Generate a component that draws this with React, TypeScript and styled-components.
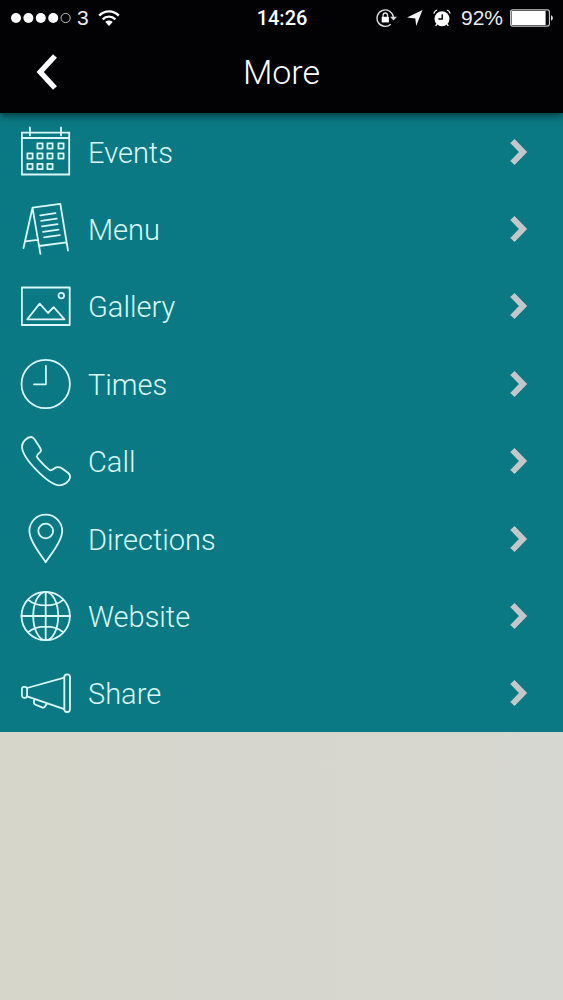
import React from "react";
import styled, { createGlobalStyle } from "styled-components";

const GlobalStyle = createGlobalStyle`
  *, *::before, *::after { box-sizing: border-box; }
  body {
    margin: 0;
    min-height: 100vh;
    background: linear-gradient(90deg, #d6d6ca 0%, #d6d6ce 40%, #d7d7d1 100%);
    font-family: Roboto, "Liberation Sans", sans-serif;
    font-weight: 300;
  }
`;

const Top = styled.div`
  position: relative;
  background: #020104;
  color: #fff;
  box-shadow: 0 2px 8px rgba(0, 0, 0, 0.6);
`;

const StatusBar = styled.div`
  display: grid;
  grid-template-columns: 1fr auto 1fr;
  align-items: center;
  height: 36px;
  padding: 0 10px 0 11px;
`;

const StatusGroup = styled.div<{ $end?: boolean; $gap: number }>`
  display: flex;
  align-items: center;
  justify-content: ${(p) => (p.$end ? "flex-end" : "flex-start")};
  gap: ${(p) => p.$gap}px;
`;

const StatusText = styled.span`
  font-family: "Liberation Sans", sans-serif;
  font-weight: 400;
  font-size: 21px;
  line-height: 24px;
  color: #ececee;
`;

const Clock = styled.time`
  font-size: 20px;
  line-height: 24px;
  font-weight: 500;
`;

const NavBar = styled.header`
  display: grid;
  grid-template-columns: 72px 1fr 72px;
  align-items: center;
  height: 77px;
  padding-bottom: 6px;
`;

const BackButton = styled.button`
  display: flex;
  align-items: center;
  justify-content: center;
  height: 56px;
  padding: 0 0 0 22px;
  border: 0;
  background: none;
  color: inherit;
  cursor: pointer;
`;

const Title = styled.h1`
  margin: 0;
  text-align: center;
  font-size: 34px;
  line-height: 40px;
  font-weight: 300;
`;

const List = styled.ul`
  display: grid;
  grid-auto-rows: 1fr;
  min-height: 619px;
  margin: 0;
  padding: 0;
  list-style: none;
  background: #0a7983;
`;

const Item = styled.li`
  display: grid;
`;

const RowLink = styled.a`
  display: flex;
  align-items: center;
  gap: 16px;
  padding: 0 35px 0 20px;
  color: #daf8f9;
  text-decoration: none;
`;

const Label = styled.span`
  flex: 1;
  font-size: 29px;
  line-height: 36px;
  padding-top: 2px;
`;

const RowIcon = styled.svg.attrs({ viewBox: "0 0 52 52", "aria-hidden": true })`
  width: 52px;
  height: 52px;
  flex: none;
  fill: none;
  stroke: currentColor;
  stroke-width: 1.8;
  stroke-linejoin: round;
  stroke-linecap: round;
`;

const Chevron = styled.svg.attrs({ viewBox: "0 0 18 28", "aria-hidden": true })`
  width: 18px;
  height: 28px;
  flex: none;
  fill: none;
  stroke: #c3c7c9;
  stroke-width: 6;
`;

const squares = [
  [20, 20], [30, 20], [41, 20],
  [10, 30], [20, 30], [30, 30], [41, 30],
  [10, 40.5], [20, 40.5], [30, 40.5],
];

const items: { label: string; icon: React.ReactNode }[] = [
  {
    label: "Events",
    icon: (
      <>
        <path d="M1.9 6.7H49.2V48.5H1.9ZM1.9 12H49.2M9.9 1.4V9.4M41 1.4V9.4" strokeLinejoin="miter" />
        {squares.map(([x, y]) => (
          <rect key={`${x}-${y}`} x={x - 2.6} y={y - 2.6} width="5.2" height="5.2" />
        ))}
      </>
    ),
  },
  {
    label: "Menu",
    icon: (
      <path d="M3.5 45 12.5 4.7 40.3 .9 48 47.5M12.5 4.7 20.4 50.8M5.3 38.4 17.8 36.9M19 43 46.7 39.3M20.3 12.3 35.5 10.2M21.2 17.8 36.8 15.7M22 23.3 37.6 21.2M23 28.8 38.6 26.7M24 34.3 39.8 32.2" />
    ),
  },
  {
    label: "Gallery",
    icon: (
      <>
        <rect x="1.9" y="7.5" width="47.8" height="37.5" />
        <circle cx="41.3" cy="15.6" r="2.8" />
        <path d="M7.3 39.3 19.7 23.6 28 33 33.7 27.2 44.5 39.3Z" />
      </>
    ),
  },
  {
    label: "Times",
    icon: (
      <>
        <circle cx="25.7" cy="26" r="24.2" />
        <path d="M25.9 8V26.3H14" />
      </>
    ),
  },
  {
    label: "Call",
    icon: (
      <path d="M2 11.5C2 6.5 7.5 2 11 2C12.3 2 13.4 2.7 14.5 4.3L20.2 13C21.5 15.2 21.2 16.4 19.8 17.6C17.8 19.1 16.6 19.7 16.8 21.7C17.8 24 28 34.6 30.5 35.3C32.6 35.8 34.2 32.4 37.6 32.1C39.2 32 40.5 32.5 41.8 33.3L48 37.8C49.8 39.2 50.4 41 49.9 43C48.9 46.8 44.5 50.3 39.5 50.3C29 50.3 2 23.5 2 11.5Z" />
    ),
  },
  {
    label: "Directions",
    icon: (
      <>
        <path d="M25.7 49.3C23 44 9.4 29.5 9.4 18C9.4 8.6 16.8 1.7 25.7 1.7S42.2 8.6 42.2 18C42.2 29.5 28.4 44 25.7 49.3Z" />
        <circle cx="25.7" cy="18" r="7.4" />
      </>
    ),
  },
  {
    label: "Website",
    icon: (
      <>
        <circle cx="25.7" cy="26" r="24.2" />
        <ellipse cx="25.7" cy="26" rx="12.5" ry="24.2" />
        <path d="M25.7 1.8V50.2M1.5 26H49.9M8.3 9.8C16.5 17.2 34.9 17.2 43.1 9.8M8.3 42.2C16.5 34.8 34.9 34.8 43.1 42.2" />
      </>
    ),
  },
  {
    label: "Share",
    icon: (
      <>
        <rect x="1.9" y="19.8" width="5.2" height="11" rx="2.2" />
        <rect x="44.3" y="7.4" width="5.7" height="37.6" rx="2.8" />
        <path d="M7.1 21 44.3 10.6M7.1 29.4 44.3 42.2M14.4 32 13.9 34.6C13.7 36 14 37 15.3 37.6L22 40.4C23.4 40.8 24.3 40.5 25 39.4L26.9 36.4" />
      </>
    ),
  },
];

function SignalDots() {
  return (
    <svg width="60" height="12" viewBox="0 0 60 12" fill="#fff" role="img" aria-label="Signal strength">
      {[5, 17.4, 29.8, 42.2].map((x) => (
        <circle key={x} cx={x} cy="6" r="5" />
      ))}
      <circle cx="54.6" cy="6" r="4.6" fill="none" stroke="#bbb" strokeWidth="1" />
    </svg>
  );
}

function Wifi() {
  return (
    <svg width="26" height="18" viewBox="-3 0 26 18" fill="none" stroke="#fff" strokeWidth="2.4" role="img" aria-label="Wi-Fi">
      <path d="M1.2 6.6C6.7.9 15.3.9 20.8 6.6M4.7 10.3C8.2 6.7 13.8 6.7 17.3 10.3" />
      <path d="M11 17 7.3 13.1C9.3 11.1 12.7 11.1 14.7 13.1Z" fill="#fff" stroke="none" />
    </svg>
  );
}

function RotationLock() {
  return (
    <svg width="21" height="20" viewBox="0 0 21 20" fill="none" stroke="#ddd" role="img" aria-label="Rotation lock">
      <path d="M14.8 16.2A8.2 8.2 0 1 1 17.4 9.2" strokeWidth="1.4" />
      <path d="M14 8.7H21L17.5 12.5Z" fill="#ddd" stroke="none" />
      <rect x="5.7" y="8.8" width="7.2" height="5.6" fill="#fff" stroke="none" />
      <path d="M7.1 9V7.2a2.2 2.2 0 0 1 4.4 0V9" strokeWidth="1.3" />
    </svg>
  );
}

function LocationArrow() {
  return (
    <svg width="16" height="18" viewBox="0 0 16 18" fill="#f4f4f4" role="img" aria-label="Location">
      <path d="M15.5 1 9.2 17 8.3 9.4 0 8.4Z" />
    </svg>
  );
}

function Alarm() {
  return (
    <svg width="18" height="18" viewBox="0 0 18 18" fill="none" role="img" aria-label="Alarm">
      <circle cx="9" cy="9.8" r="7.5" fill="#fff" />
      <path d="M9.2 5.2V10H5.4" stroke="#020104" strokeWidth="1.4" />
      <path d="M.8 4.4C1.4 2.8 2.6 1.5 4.2 1M17.2 4.4C16.6 2.8 15.4 1.5 13.8 1M4 15 2.6 16.8M14 15 15.4 16.8" stroke="#fff" strokeWidth="1.3" />
    </svg>
  );
}

function Battery() {
  return (
    <svg width="43" height="18" viewBox="0 0 43 18" role="img" aria-label="Battery">
      <rect x=".6" y=".9" width="38.8" height="16.2" rx="2" fill="none" stroke="#c8c8c8" strokeWidth="1.1" />
      <rect x="1.6" y="2" width="34" height="14" fill="#fff" />
      <path d="M41 6.2C43.4 7 43.4 11 41 11.8Z" fill="#ddd" />
    </svg>
  );
}

export default function App() {
  return (
    <>
      <GlobalStyle />
      <Top>
        <StatusBar>
          <StatusGroup $gap={6}>
            <SignalDots />
            <StatusText>3</StatusText>
            <Wifi />
          </StatusGroup>
          <Clock>14:26</Clock>
          <StatusGroup $gap={10} $end>
            <RotationLock />
            <LocationArrow />
            <Alarm />
            <StatusGroup $gap={7}>
              <StatusText>92%</StatusText>
              <Battery />
            </StatusGroup>
          </StatusGroup>
        </StatusBar>
        <NavBar>
          <BackButton type="button" aria-label="Back">
            <svg width="22" height="36" viewBox="0 0 22 36" fill="none" stroke="#fff" strokeWidth="5.4">
              <path d="M19 2 4.2 18 19 34" />
            </svg>
          </BackButton>
          <Title>More</Title>
        </NavBar>
      </Top>
      <main>
        <List>
          {items.map(({ label, icon }) => (
            <Item key={label}>
              <RowLink href={`#${label.toLowerCase()}`}>
                <RowIcon>{icon}</RowIcon>
                <Label>{label}</Label>
                <Chevron>
                  <path d="M2.4 3 13 14 2.4 25" />
                </Chevron>
              </RowLink>
            </Item>
          ))}
        </List>
      </main>
    </>
  );
}
